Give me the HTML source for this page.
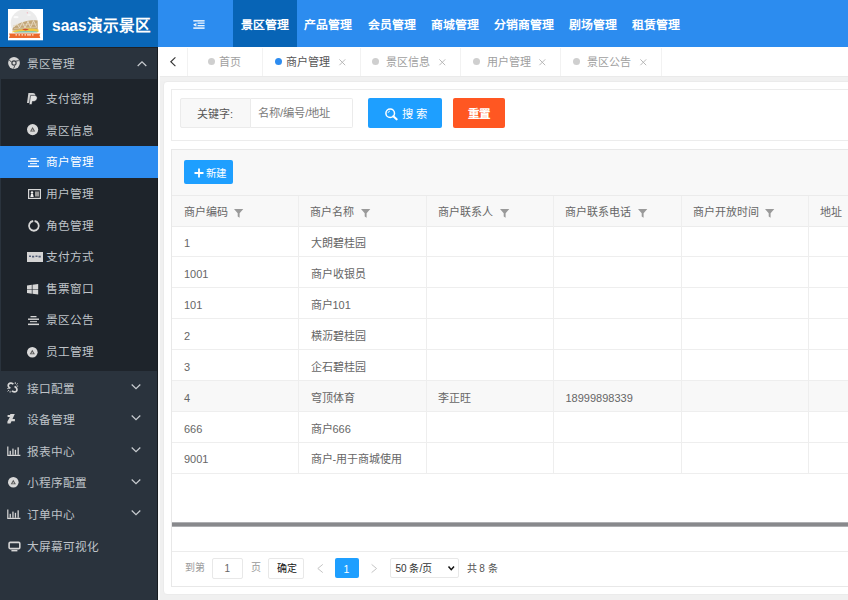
<!DOCTYPE html>
<html lang="zh-CN">
<head>
<meta charset="utf-8">
<style>
*{margin:0;padding:0;box-sizing:border-box;}
html,body{width:848px;height:600px;overflow:hidden;background:#f0f0f0;font-family:"Liberation Sans",sans-serif;}
.a{position:absolute;}
.tx{position:absolute;white-space:nowrap;}
svg{position:absolute;overflow:visible;}
</style>
</head>
<body>
<div class="a" style="left:0;top:0;width:158px;height:47.2px;background:#0966b7;"></div>
<div class="a" style="left:158px;top:0;width:690px;height:47.2px;background:#2c8cef;"></div>
<svg style="left:8px;top:8.7px;" width="35" height="31.3" viewBox="0 0 35 31.3">
<rect x="0" y="0" width="35" height="31.3" fill="#fff"/>
<circle cx="16.3" cy="14" r="13.6" fill="#ebebeb"/>
<ellipse cx="8" cy="8.2" rx="2.6" ry="1.1" fill="#fafafa"/>
<ellipse cx="21" cy="6" rx="2" ry="0.8" fill="#f6f6f6"/>
<circle cx="19.3" cy="3.8" r="0.6" fill="#f4a0b0"/>
<path d="M4.4 21.5 C4.6 17 9 15 16 12.8 C22 11 27 11 29.6 11.6 L29.8 21 C22 21.5 12 21.5 4.4 21.5 Z" fill="#c2a679"/>
<path d="M6 18 L9 14.5 L11.5 19 L14.5 13.2 L17 19 L20 12.3 L22.5 18.5 L25.5 11.6 L28.5 18" stroke="#efe6d6" stroke-width="0.8" fill="none"/>
<path d="M5 16.5 L29 15 M6 19.5 L29 18.5" stroke="#e2d3b8" stroke-width="0.6" fill="none"/>
<path d="M4 22.8 C8 20.5 12 21 16 19.8 C21 19 26 19.5 30.5 20.6 L30.5 23 L4 23.2 Z" fill="#efc840"/>
<path d="M14 20.6 C16 19.4 19 19.6 21 20.6 L17.5 21.5 Z" fill="#cf4a2c"/>
<path d="M6 23.3 C11 21.8 21 21.7 29.5 22.4 L29.5 23.6 L6 23.6 Z" fill="#86c7ad"/>
<path d="M1 24.4 L32.3 24.4 L31.5 26.6 L32.3 28.9 L1 28.9 L1.8 26.6 Z" fill="#ec6a2c"/>
<path d="M7.5 25.8 L9 25.8 M10.5 25.8 L12 25.8 M13.5 25.8 L15 25.8 M16.5 25.8 L18 25.8 M19 25.8 L23 25.8 M24 25.8 L25.5 25.8" stroke="#ffe3cc" stroke-width="1.3"/>
</svg>
<div class="tx" style="left:52px;top:14.6px;color:#fff;font-size:15.6px;font-weight:bold;line-height:22px;">saas演示景区</div>
<svg style="left:192.7px;top:19.8px;" width="12.2" height="9.2" viewBox="0 0 12.2 9.2">
<rect x="0.3" y="0.2" width="11.3" height="1.3" fill="#fff"/>
<rect x="4.5" y="2.4" width="7.1" height="1.5" fill="#fff" opacity="0.8"/>
<rect x="4.5" y="5.1" width="7.1" height="1.2" fill="#fff"/>
<rect x="0.3" y="7.4" width="11.3" height="1.4" fill="#fff"/>
<path d="M0.2 4.7 L2.8 2.9 L2.8 6.5 Z" fill="#fff"/><rect x="3.2" y="2.8" width="0.6" height="3.8" fill="#fff" opacity="0.6"/>
</svg>
<div class="a" style="left:233.2px;top:0;width:63.7px;height:47.2px;background:#0764b6;"></div>
<div class="tx" style="left:240.6px;top:16.5px;line-height:16px;color:#fff;font-size:11.9px;font-weight:bold;">景区管理</div>
<div class="a" style="left:296.9px;top:0;width:63.7px;height:47.2px;"></div>
<div class="tx" style="left:304.2px;top:16.5px;line-height:16px;color:#fff;font-size:11.9px;font-weight:bold;">产品管理</div>
<div class="a" style="left:360.6px;top:0;width:63.7px;height:47.2px;"></div>
<div class="tx" style="left:367.8px;top:16.5px;line-height:16px;color:#fff;font-size:11.9px;font-weight:bold;">会员管理</div>
<div class="a" style="left:424.3px;top:0;width:63.7px;height:47.2px;"></div>
<div class="tx" style="left:431.2px;top:16.5px;line-height:16px;color:#fff;font-size:11.9px;font-weight:bold;">商城管理</div>
<div class="a" style="left:488px;top:0;width:75.4px;height:47.2px;"></div>
<div class="tx" style="left:494px;top:16.5px;line-height:16px;color:#fff;font-size:11.9px;font-weight:bold;">分销商管理</div>
<div class="a" style="left:563.4px;top:0;width:63.7px;height:47.2px;"></div>
<div class="tx" style="left:569.2px;top:16.5px;line-height:16px;color:#fff;font-size:11.9px;font-weight:bold;">剧场管理</div>
<div class="a" style="left:627px;top:0;width:63.7px;height:47.2px;"></div>
<div class="tx" style="left:632px;top:16.5px;line-height:16px;color:#fff;font-size:11.9px;font-weight:bold;">租赁管理</div>
<div class="a" style="left:0;top:47.2px;width:158px;height:552.8px;background:#2a333d;"></div>
<div class="a" style="left:0;top:47.2px;width:158px;height:1px;background:#1e2125;"></div>
<div class="a" style="left:1px;top:78.5px;width:157px;height:292.2px;background:#1e242b;"></div>
<div class="a" style="left:157px;top:47.2px;width:1px;height:552.8px;background:#181d22;"></div>
<div class="tx" style="left:27px;top:55.90px;line-height:16px;color:#bfc3c8;font-size:11.7px;">景区管理</div>
<svg style="left:7.5px;top:56.90px;" width="12" height="12" viewBox="0 0 12 12">
<circle cx="6" cy="6" r="5.9" fill="#d6d6d6"/><circle cx="6" cy="6" r="2.7" fill="#3a3f46"/><circle cx="6" cy="6" r="1.5" fill="#d6d6d6"/>
<path d="M3.6 5 L1.2 3.2 M6.8 8.6 L5.6 11.6 M7.6 4.2 L10.8 3.6" stroke="#3a3f46" stroke-width="0.9"/></svg>
<svg style="left:136.7px;top:60.80px;" width="10" height="5.5" viewBox="0 0 10 5.5"><path d="M0.7 5 L5 0.8 L9.3 5" stroke="#c8ccd0" stroke-width="1.2" fill="none"/></svg>
<div class="tx" style="left:46px;top:90.95px;line-height:16px;color:#bfc3c8;font-size:11.7px;">支付密钥</div>
<svg style="left:27.2px;top:93.45px;" width="11" height="11.8" viewBox="0 0 11 11.8">
<path d="M1.4 0 L5.8 0 C8 0 8.7 1.6 8.3 3.4 C7.9 5.4 6.4 6.4 4.2 6.4 L3.3 6.4 L2.7 10.1 L0 10.1 Z" fill="#cfcfcf"/>
<path d="M3.6 2.4 L7.6 2.4 C9.8 2.6 10.5 3.9 10.1 5.6 C9.7 7.6 8.3 8.5 6.2 8.5 L5.4 8.5 L4.9 11.6 L2.1 11.6 Z" fill="#e2e2e2" stroke="#1e242b" stroke-width="0.6"/>
</svg>
<div class="tx" style="left:46px;top:122.59px;line-height:16px;color:#bfc3c8;font-size:11.7px;">景区信息</div>
<svg style="left:27px;top:124.49px;" width="11.2" height="11.2" viewBox="0 0 11.2 11.2">
<circle cx="5.6" cy="5.6" r="5.6" fill="#d9d9d9"/><path d="M5.6 2.9999999999999996 L8.2 7.6 L2.9999999999999996 7.6 Z" fill="#555" /><path d="M5.6 5.0 L6.699999999999999 6.8 L4.5 6.8 Z" fill="#ccc"/></svg>
<div class="a" style="left:0;top:146.03px;width:158px;height:32px;background:#2d8cf0;"></div>
<div class="tx" style="left:46px;top:154.23px;line-height:16px;color:#fff;font-size:11.7px;">商户管理</div>
<svg style="left:28.3px;top:157.73px;" width="11" height="9.5" viewBox="0 0 11 9.5">
<rect x="2.5" y="0" width="6" height="1.3" fill="#fff"/><rect x="0" y="2.5" width="11" height="1.4" fill="#fff"/>
<rect x="2" y="5" width="7" height="1.2" fill="#fff" opacity="0.85"/><rect x="0" y="7.6" width="11" height="1.5" fill="#fff"/></svg>
<div class="tx" style="left:46px;top:185.87px;line-height:16px;color:#bfc3c8;font-size:11.7px;">用户管理</div>
<svg style="left:27.5px;top:189.37px;" width="13" height="10" viewBox="0 0 13 10">
<rect x="0.6" y="0.6" width="11.8" height="8.8" stroke="#d6d6d6" stroke-width="1.2" fill="none"/>
<path d="M2.3 8 L3 5 L5 5 L5.7 8 Z" fill="#eee"/><circle cx="4" cy="3.5" r="1.2" fill="#eee"/><rect x="7" y="2.5" width="4" height="5" fill="#999"/></svg>
<div class="tx" style="left:46px;top:217.51px;line-height:16px;color:#bfc3c8;font-size:11.7px;">角色管理</div>
<svg style="left:27.5px;top:220.21px;" width="11.7" height="11.7" viewBox="0 0 11.7 11.7">
<path d="M5.2 1 A4.9 4.9 0 1 0 6.6 1" stroke="#d6d6d6" stroke-width="1.8" fill="none"/></svg>
<div class="tx" style="left:46px;top:249.15px;line-height:16px;color:#bfc3c8;font-size:11.7px;">支付方式</div>
<svg style="left:27px;top:251.65px;" width="16" height="10" viewBox="0 0 16 10">
<rect x="0" y="0" width="16" height="10" fill="#d4d4d4"/><path d="M2 4.3 L4 4.3 M5 4.6 L7.2 4.6 M8.5 4.3 L10.5 4.3 M11.5 4.6 L13.8 4.6" stroke="#55607a" stroke-width="1.6"/></svg>
<div class="tx" style="left:46px;top:280.79px;line-height:16px;color:#bfc3c8;font-size:11.7px;">售票窗口</div>
<svg style="left:27.3px;top:283.99px;" width="11.2" height="10.5" viewBox="0 0 11.2 10.5">
<path d="M0 1.5 L4.8 0.8 L4.8 4.9 L0 4.9 Z M5.5 0.7 L11.2 0 L11.2 4.9 L5.5 4.9 Z M0 5.6 L4.8 5.6 L4.8 9.7 L0 9.1 Z M5.5 5.6 L11.2 5.6 L11.2 10.5 L5.5 9.8 Z" fill="#d6d6d6"/></svg>
<div class="tx" style="left:46px;top:312.43px;line-height:16px;color:#bfc3c8;font-size:11.7px;">景区公告</div>
<svg style="left:28px;top:315.93px;" width="11" height="9.5" viewBox="0 0 11 9.5">
<rect x="2.5" y="0" width="6" height="1.3" fill="#d6d6d6"/><rect x="0" y="2.5" width="11" height="1.4" fill="#d6d6d6"/>
<rect x="2" y="5" width="7" height="1.2" fill="#d6d6d6" opacity="0.85"/><rect x="0" y="7.6" width="11" height="1.5" fill="#d6d6d6"/></svg>
<div class="tx" style="left:46px;top:344.07px;line-height:16px;color:#bfc3c8;font-size:11.7px;">员工管理</div>
<svg style="left:27px;top:347.27px;" width="10.6" height="10.6" viewBox="0 0 10.6 10.6">
<circle cx="5.3" cy="5.3" r="5.3" fill="#d9d9d9"/><path d="M5.3 2.6999999999999997 L7.9 7.3 L2.6999999999999997 7.3 Z" fill="#555" /><path d="M5.3 4.7 L6.4 6.5 L4.199999999999999 6.5 Z" fill="#ccc"/></svg>
<div class="tx" style="left:27px;top:380.60px;line-height:16px;color:#bfc3c8;font-size:11.7px;">接口配置</div>
<svg style="left:7.4px;top:381.90px;" width="11.4" height="10.8" viewBox="0 0 11.4 10.8">
<path d="M6.3 2.3 C5.3 0.9 3 0.6 1.9 1.8 C0.8 3 1.1 4.7 2.5 5.7 L3.4 6.3 M7.6 4.4 L8.6 5.2 C10.1 6.2 10.4 7.9 9.4 9.1 C8.3 10.3 6 10.1 5 8.7" stroke="#d6d6d6" stroke-width="1.7" fill="none"/>
<path d="M8.3 0.2 L8.3 2 M10.8 1.4 L9.4 2.7 M11.2 4.1 L9.6 4.1 M0.2 6.6 L1.8 6.6 M0.6 9.4 L2 8.1 M3.1 10.6 L3.1 8.8" stroke="#d6d6d6" stroke-width="0.9"/></svg>
<svg style="left:130.5px;top:383.80px;" width="10" height="5.5" viewBox="0 0 10 5.5"><path d="M0.7 0.5 L5 4.7 L9.3 0.5" stroke="#c8ccd0" stroke-width="1.2" fill="none"/></svg>
<div class="tx" style="left:27px;top:412.20px;line-height:16px;color:#bfc3c8;font-size:11.7px;">设备管理</div>
<svg style="left:7.4px;top:414.10px;" width="8.5" height="9.6" viewBox="0 0 8.5 9.6">
<path d="M3.4 0 L7.8 0 L5.5 4.9 L7.9 4.9 L7.9 7.3 L4.5 7.3 L3.4 9.6 L0.4 9.6 L0.4 7.6 L2.9 3.1 L0.6 3.1 L0.6 1.1 L3 1.1 Z" fill="#d6d6d6"/></svg>
<svg style="left:130.5px;top:415.40px;" width="10" height="5.5" viewBox="0 0 10 5.5"><path d="M0.7 0.5 L5 4.7 L9.3 0.5" stroke="#c8ccd0" stroke-width="1.2" fill="none"/></svg>
<div class="tx" style="left:27px;top:443.80px;line-height:16px;color:#bfc3c8;font-size:11.7px;">报表中心</div>
<svg style="left:7.4px;top:445.70px;" width="13.5" height="10" viewBox="0 0 13.5 10">
<path d="M0.8 0.5 L0.8 9.3 L13.4 9.3" stroke="#d6d6d6" stroke-width="1.2" fill="none"/>
<rect x="2.6" y="4.8" width="1.3" height="4" fill="#d6d6d6"/><rect x="5.3" y="2.6" width="1.3" height="6.2" fill="#d6d6d6"/><rect x="7.8" y="3.8" width="1.3" height="5" fill="#d6d6d6"/><rect x="10.5" y="1.3" width="1.3" height="7.5" fill="#d6d6d6"/></svg>
<svg style="left:130.5px;top:447.00px;" width="10" height="5.5" viewBox="0 0 10 5.5"><path d="M0.7 0.5 L5 4.7 L9.3 0.5" stroke="#c8ccd0" stroke-width="1.2" fill="none"/></svg>
<div class="tx" style="left:27px;top:475.40px;line-height:16px;color:#bfc3c8;font-size:11.7px;">小程序配置</div>
<svg style="left:7.6px;top:476.80px;" width="10.6" height="10.6" viewBox="0 0 10.6 10.6">
<circle cx="5.3" cy="5.3" r="5.3" fill="#d9d9d9"/><path d="M5.3 2.6999999999999997 L7.9 7.3 L2.6999999999999997 7.3 Z" fill="#555" /><path d="M5.3 4.7 L6.4 6.5 L4.199999999999999 6.5 Z" fill="#ccc"/></svg>
<svg style="left:130.5px;top:478.60px;" width="10" height="5.5" viewBox="0 0 10 5.5"><path d="M0.7 0.5 L5 4.7 L9.3 0.5" stroke="#c8ccd0" stroke-width="1.2" fill="none"/></svg>
<div class="tx" style="left:27px;top:507.00px;line-height:16px;color:#bfc3c8;font-size:11.7px;">订单中心</div>
<svg style="left:7.4px;top:508.90px;" width="13.5" height="10" viewBox="0 0 13.5 10">
<path d="M0.8 0.5 L0.8 9.3 L13.4 9.3" stroke="#d6d6d6" stroke-width="1.2" fill="none"/>
<rect x="2.6" y="4.8" width="1.3" height="4" fill="#d6d6d6"/><rect x="5.3" y="2.6" width="1.3" height="6.2" fill="#d6d6d6"/><rect x="7.8" y="3.8" width="1.3" height="5" fill="#d6d6d6"/><rect x="10.5" y="1.3" width="1.3" height="7.5" fill="#d6d6d6"/></svg>
<svg style="left:130.5px;top:510.20px;" width="10" height="5.5" viewBox="0 0 10 5.5"><path d="M0.7 0.5 L5 4.7 L9.3 0.5" stroke="#c8ccd0" stroke-width="1.2" fill="none"/></svg>
<div class="tx" style="left:27px;top:538.60px;line-height:16px;color:#bfc3c8;font-size:11.7px;">大屏幕可视化</div>
<svg style="left:7.6px;top:540.60px;" width="13" height="10.5" viewBox="0 0 13 10.5">
<rect x="1.1" y="1.4" width="10.7" height="6.2" rx="1.2" stroke="#d6d6d6" stroke-width="1.6" fill="none"/><rect x="3.4" y="8.9" width="6" height="1.5" fill="#d6d6d6"/></svg>
<div class="a" style="left:158px;top:47.2px;width:690px;height:28.8px;background:#fff;"></div>
<svg style="left:170px;top:57px;" width="6" height="9.5" viewBox="0 0 6 9.5"><path d="M5.4 0.4 L0.8 4.75 L5.4 9.1" stroke="#333" stroke-width="1.1" fill="none"/></svg>
<div class="a" style="left:186.5px;top:47.5px;width:1px;height:28.5px;background:#f2f2f2;"></div>
<div class="a" style="left:262px;top:47.5px;width:1px;height:28.5px;background:#f2f2f2;"></div>
<div class="a" style="left:359.5px;top:47.5px;width:1px;height:28.5px;background:#f2f2f2;"></div>
<div class="a" style="left:460px;top:47.5px;width:1px;height:28.5px;background:#f2f2f2;"></div>
<div class="a" style="left:560px;top:47.5px;width:1px;height:28.5px;background:#f2f2f2;"></div>
<div class="a" style="left:660.5px;top:47.5px;width:1px;height:28.5px;background:#f2f2f2;"></div>
<div class="a" style="left:208.1px;top:58px;width:7px;height:7px;border-radius:50%;background:#cfcfcf;"></div>
<div class="tx" style="left:219px;top:53.5px;line-height:16px;font-size:11px;color:#a0a0a0;">首页</div>
<div class="a" style="left:274.5px;top:58px;width:7px;height:7px;border-radius:50%;background:#2d8cf0;"></div>
<div class="tx" style="left:285.5px;top:53.5px;line-height:16px;font-size:11px;color:#555;">商户管理</div>
<svg style="left:338.7px;top:58.7px;" width="6.6" height="6.6" viewBox="0 0 6.6 6.6"><path d="M0.4 0.4 L6.2 6.2 M6.2 0.4 L0.4 6.2" stroke="#b0b0b0" stroke-width="0.9"/></svg>
<div class="a" style="left:371.5px;top:58px;width:7px;height:7px;border-radius:50%;background:#cfcfcf;"></div>
<div class="tx" style="left:386px;top:53.5px;line-height:16px;font-size:11px;color:#a0a0a0;">景区信息</div>
<svg style="left:438.7px;top:58.7px;" width="6.6" height="6.6" viewBox="0 0 6.6 6.6"><path d="M0.4 0.4 L6.2 6.2 M6.2 0.4 L0.4 6.2" stroke="#b0b0b0" stroke-width="0.9"/></svg>
<div class="a" style="left:472.5px;top:58px;width:7px;height:7px;border-radius:50%;background:#cfcfcf;"></div>
<div class="tx" style="left:486.5px;top:53.5px;line-height:16px;font-size:11px;color:#a0a0a0;">用户管理</div>
<svg style="left:539.3000000000001px;top:58.7px;" width="6.6" height="6.6" viewBox="0 0 6.6 6.6"><path d="M0.4 0.4 L6.2 6.2 M6.2 0.4 L0.4 6.2" stroke="#b0b0b0" stroke-width="0.9"/></svg>
<div class="a" style="left:573.0px;top:58px;width:7px;height:7px;border-radius:50%;background:#cfcfcf;"></div>
<div class="tx" style="left:587px;top:53.5px;line-height:16px;font-size:11px;color:#a0a0a0;">景区公告</div>
<svg style="left:639.7px;top:58.7px;" width="6.6" height="6.6" viewBox="0 0 6.6 6.6"><path d="M0.4 0.4 L6.2 6.2 M6.2 0.4 L0.4 6.2" stroke="#b0b0b0" stroke-width="0.9"/></svg>
<div class="a" style="left:158px;top:76px;width:690px;height:5px;background:#f1f1f1;border-top:1.5px solid #eaeaea;"></div>
<div class="a" style="left:158px;top:76px;width:2px;height:524px;background:#fbfbfb;"></div>
<div class="a" style="left:163px;top:81px;width:700px;height:513.8px;background:#fff;border:1px solid #ebebeb;border-radius:4px;"></div>
<div class="a" style="left:171px;top:88.8px;width:700px;height:51.8px;background:#fff;border:1px solid #ececec;"></div>
<div class="a" style="left:180px;top:98.3px;width:71px;height:29.8px;background:#f8f8f8;border:1px solid #ebebeb;border-radius:2px 0 0 2px;"></div>
<div class="tx" style="left:197px;top:105.5px;line-height:16px;font-size:11px;color:#555;">关键字:</div>
<div class="a" style="left:250.5px;top:98.3px;width:102px;height:29.8px;background:#fff;border:1px solid #ebebeb;border-left:none;border-radius:0 2px 2px 0;"></div>
<div class="tx" style="left:258px;top:105.3px;line-height:16px;font-size:11.3px;color:#7a7a7a;">名称/编号/地址</div>
<div class="a" style="left:368px;top:98.2px;width:74.2px;height:29.8px;background:#1e9fff;border-radius:2px;"></div>
<svg style="left:384.5px;top:108px;" width="13" height="12" viewBox="0 0 13 12"><circle cx="5.2" cy="5.2" r="4.3" stroke="#fff" stroke-width="1.5" fill="none"/><path d="M8.3 8.3 L11.6 11.3" stroke="#fff" stroke-width="2.2" stroke-linecap="round"/><path d="M3 5 A2.3 2.3 0 0 1 5 3" stroke="#fff" stroke-width="0.8" fill="none"/></svg>
<div class="tx" style="left:401.8px;top:106px;line-height:16px;font-size:11.3px;color:#fff;font-weight:500;letter-spacing:3.5px;">搜索</div>
<div class="a" style="left:453.4px;top:98.2px;width:51.8px;height:29.8px;background:#ff5722;border-radius:2px;"></div>
<div class="tx" style="left:467.5px;top:105.5px;line-height:16px;font-size:11.5px;color:#fff;font-weight:bold;">重置</div>
<div class="a" style="left:171px;top:149px;width:700px;height:437.5px;background:#fff;border:1px solid #e8e8e8;"></div>
<div class="a" style="left:172px;top:150px;width:700px;height:45.5px;background:#f8f8f8;border-bottom:1px solid #ebebeb;"></div>
<div class="a" style="left:183.7px;top:160px;width:48.9px;height:23.7px;background:#1e9fff;border-radius:2px;"></div>
<svg style="left:193.6px;top:167.5px;" width="10" height="10" viewBox="0 0 10 10"><path d="M5 0.5 L5 9.5 M0.5 5 L9.5 5" stroke="#fff" stroke-width="1.8"/></svg>
<div class="tx" style="left:205.8px;top:164.6px;line-height:16px;font-size:10.5px;color:#fff;">新建</div>
<div class="a" style="left:172px;top:195.5px;width:700px;height:31px;background:#f8f8f8;"></div>
<div class="a" style="left:172px;top:225.5px;width:700px;height:1px;background:#ececec;"></div>
<div class="tx" style="left:183.8px;top:203.8px;line-height:16px;font-size:11px;color:#666;">商户编码</div>
<div class="tx" style="left:310.3px;top:203.8px;line-height:16px;font-size:11px;color:#666;">商户名称</div>
<div class="tx" style="left:437.8px;top:203.8px;line-height:16px;font-size:11px;color:#666;">商户联系人</div>
<div class="tx" style="left:565.3px;top:203.8px;line-height:16px;font-size:11px;color:#666;">商户联系电话</div>
<div class="tx" style="left:692.8px;top:203.8px;line-height:16px;font-size:11px;color:#666;">商户开放时间</div>
<div class="tx" style="left:820.3px;top:203.8px;line-height:16px;font-size:11px;color:#666;">地址</div>
<svg style="left:233.5px;top:208.5px;" width="9.3" height="8.7" viewBox="0 0 9.3 8.7"><path d="M0 0 L9.3 0 L5.6 4.2 L5.6 8.7 L3.7 7.4 L3.7 4.2 Z" fill="#9a9a9a"/></svg>
<svg style="left:360.8px;top:208.5px;" width="9.3" height="8.7" viewBox="0 0 9.3 8.7"><path d="M0 0 L9.3 0 L5.6 4.2 L5.6 8.7 L3.7 7.4 L3.7 4.2 Z" fill="#9a9a9a"/></svg>
<svg style="left:499.5px;top:208.5px;" width="9.3" height="8.7" viewBox="0 0 9.3 8.7"><path d="M0 0 L9.3 0 L5.6 4.2 L5.6 8.7 L3.7 7.4 L3.7 4.2 Z" fill="#9a9a9a"/></svg>
<svg style="left:637.5px;top:208.5px;" width="9.3" height="8.7" viewBox="0 0 9.3 8.7"><path d="M0 0 L9.3 0 L5.6 4.2 L5.6 8.7 L3.7 7.4 L3.7 4.2 Z" fill="#9a9a9a"/></svg>
<svg style="left:764.7px;top:208.5px;" width="9.3" height="8.7" viewBox="0 0 9.3 8.7"><path d="M0 0 L9.3 0 L5.6 4.2 L5.6 8.7 L3.7 7.4 L3.7 4.2 Z" fill="#9a9a9a"/></svg>
<div class="a" style="left:172px;top:256.32px;width:700px;height:1px;background:#eeeeee;"></div>
<div class="tx" style="left:184px;top:235.00px;line-height:16px;font-size:11px;color:#666;">1</div>
<div class="tx" style="left:310.5px;top:235.00px;line-height:16px;font-size:11px;color:#666;">大朗碧桂园</div>
<div class="a" style="left:172px;top:287.24px;width:700px;height:1px;background:#eeeeee;"></div>
<div class="tx" style="left:184px;top:265.92px;line-height:16px;font-size:11px;color:#666;">1001</div>
<div class="tx" style="left:310.5px;top:265.92px;line-height:16px;font-size:11px;color:#666;">商户收银员</div>
<div class="a" style="left:172px;top:318.16px;width:700px;height:1px;background:#eeeeee;"></div>
<div class="tx" style="left:184px;top:296.84px;line-height:16px;font-size:11px;color:#666;">101</div>
<div class="tx" style="left:310.5px;top:296.84px;line-height:16px;font-size:11px;color:#666;">商户101</div>
<div class="a" style="left:172px;top:349.08px;width:700px;height:1px;background:#eeeeee;"></div>
<div class="tx" style="left:184px;top:327.76px;line-height:16px;font-size:11px;color:#666;">2</div>
<div class="tx" style="left:310.5px;top:327.76px;line-height:16px;font-size:11px;color:#666;">横沥碧桂园</div>
<div class="a" style="left:172px;top:380.00px;width:700px;height:1px;background:#eeeeee;"></div>
<div class="tx" style="left:184px;top:358.68px;line-height:16px;font-size:11px;color:#666;">3</div>
<div class="tx" style="left:310.5px;top:358.68px;line-height:16px;font-size:11px;color:#666;">企石碧桂园</div>
<div class="a" style="left:172px;top:381.00px;width:700px;height:30.92px;background:#f8f8f8;"></div>
<div class="a" style="left:172px;top:410.92px;width:700px;height:1px;background:#eeeeee;"></div>
<div class="tx" style="left:184px;top:389.60px;line-height:16px;font-size:11px;color:#666;">4</div>
<div class="tx" style="left:310.5px;top:389.60px;line-height:16px;font-size:11px;color:#666;">穹顶体育</div>
<div class="tx" style="left:438px;top:389.60px;line-height:16px;font-size:11px;color:#666;">李正旺</div>
<div class="tx" style="left:565.5px;top:389.60px;line-height:16px;font-size:11px;color:#666;">18999898339</div>
<div class="a" style="left:172px;top:441.84px;width:700px;height:1px;background:#eeeeee;"></div>
<div class="tx" style="left:184px;top:420.52px;line-height:16px;font-size:11px;color:#666;">666</div>
<div class="tx" style="left:310.5px;top:420.52px;line-height:16px;font-size:11px;color:#666;">商户666</div>
<div class="a" style="left:172px;top:472.76px;width:700px;height:1px;background:#eeeeee;"></div>
<div class="tx" style="left:184px;top:451.44px;line-height:16px;font-size:11px;color:#666;">9001</div>
<div class="tx" style="left:310.5px;top:451.44px;line-height:16px;font-size:11px;color:#666;">商户-用于商城使用</div>
<div class="a" style="left:298.0px;top:195.5px;width:1px;height:278.2px;background:#eeeeee;"></div>
<div class="a" style="left:425.5px;top:195.5px;width:1px;height:278.2px;background:#eeeeee;"></div>
<div class="a" style="left:553.0px;top:195.5px;width:1px;height:278.2px;background:#eeeeee;"></div>
<div class="a" style="left:680.5px;top:195.5px;width:1px;height:278.2px;background:#eeeeee;"></div>
<div class="a" style="left:808.0px;top:195.5px;width:1px;height:278.2px;background:#eeeeee;"></div>
<div class="a" style="left:172px;top:522.2px;width:700px;height:4.4px;background:#88898c;border-top:1px solid #aeafb2;border-bottom:1px solid #aeafb2;"></div>
<div class="a" style="left:172px;top:551.2px;width:700px;height:1px;background:#ececec;"></div>
<div class="tx" style="left:184.5px;top:560px;line-height:16px;font-size:10px;color:#999;">到第</div>
<div class="a" style="left:211.5px;top:558.3px;width:31px;height:20.4px;border:1px solid #e8e8e8;border-radius:2px;background:#fff;"></div>
<div class="tx" style="left:224.5px;top:560.5px;line-height:16px;font-size:10px;color:#666;">1</div>
<div class="tx" style="left:251px;top:560px;line-height:16px;font-size:10px;color:#999;">页</div>
<div class="a" style="left:268px;top:558.3px;width:36.3px;height:20.4px;border:1px solid #e8e8e8;border-radius:2px;background:#fff;"></div>
<div class="tx" style="left:276.5px;top:560.5px;line-height:16px;font-size:10px;color:#111;font-weight:500;">确定</div>
<svg style="left:316.6px;top:564px;" width="6.4" height="9" viewBox="0 0 6.4 9"><path d="M5.8 0.4 L0.8 4.5 L5.8 8.6" stroke="#c4c4c4" stroke-width="1" fill="none"/></svg>
<div class="a" style="left:334.8px;top:558.3px;width:24.2px;height:20.2px;background:#1e9fff;border-radius:2px;"></div>
<div class="tx" style="left:343.5px;top:560.5px;line-height:16px;font-size:10.5px;color:#fff;">1</div>
<svg style="left:370.8px;top:564px;" width="6.4" height="9" viewBox="0 0 6.4 9"><path d="M0.6 0.4 L5.6 4.5 L0.6 8.6" stroke="#c4c4c4" stroke-width="1" fill="none"/></svg>
<div class="a" style="left:389.5px;top:558.3px;width:69.1px;height:20.2px;border:1px solid #e8e8e8;border-radius:2px;background:#fff;"></div>
<div class="tx" style="left:395.5px;top:560.5px;line-height:16px;font-size:10px;color:#333;">50 条/页</div>
<svg style="left:448px;top:566px;" width="6.5" height="4.5" viewBox="0 0 6.5 4.5"><path d="M0.5 0.5 L3.25 3.7 L6 0.5" stroke="#111" stroke-width="1.5" fill="none"/></svg>
<div class="tx" style="left:466.5px;top:560.5px;line-height:16px;font-size:10px;color:#555;">共 8 条</div>
</body>
</html>
